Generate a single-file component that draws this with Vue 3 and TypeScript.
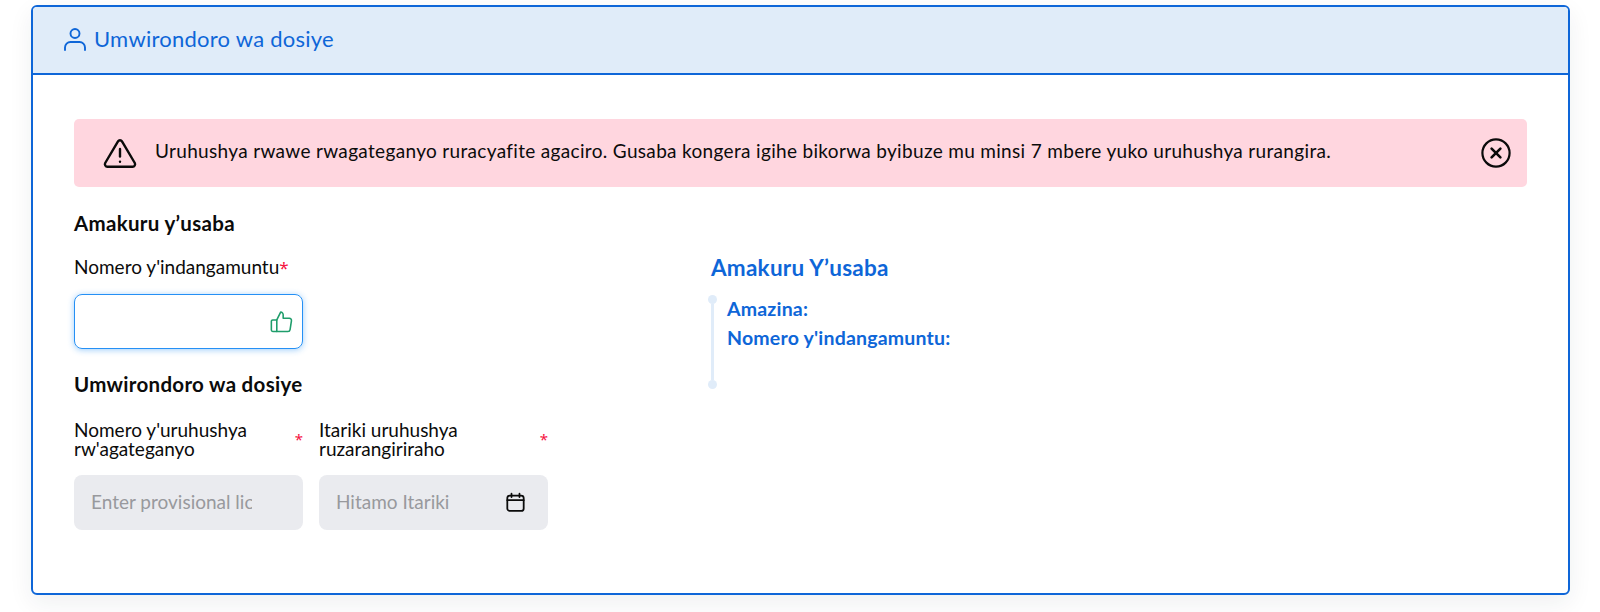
<script setup lang="ts">
const title: string = 'Umwirondoro wa dosiye'
</script>

<template>
  <div class="page">
    <section class="card">
      <header class="card-head">
        <svg class="user" width="24" height="24" viewBox="0 0 24 24" fill="none" stroke="#0e66d8" stroke-width="1.9" stroke-linecap="round" stroke-linejoin="round">
          <circle cx="12" cy="6.5" r="4.5" />
          <path d="M2 23v-2.5A5.5 5.5 0 0 1 7.500 15h9a5.500 5.500 0 0 1 5.500 5.500V23" />
        </svg>
        <span>{{ title }}</span>
      </header>
      <div class="card-body">
        <div class="alert">
          <svg class="warn" width="34" height="30" viewBox="0 0 34 30" fill="none" stroke="#0b0b0b" stroke-width="2.4" stroke-linecap="round" stroke-linejoin="round">
            <path d="M15 3.400 2.200 25a2.600 2.600 0 0 0 2.200 3.800h25.200a2.600 2.600 0 0 0 2.200-3.800L19 3.400a2.300 2.300 0 0 0-4 0Z" />
            <path d="M17 11v7.500" />
            <path d="M17 23.600v.2" />
          </svg>
          <p class="alert-text">Uruhushya rwawe rwagateganyo ruracyafite agaciro. Gusaba kongera igihe bikorwa byibuze mu minsi 7 mbere yuko uruhushya rurangira.</p>
          <svg class="close" width="30" height="30" viewBox="0 0 30 30" fill="none" stroke="#0b0b0b" stroke-linecap="round">
            <circle cx="15" cy="15" r="13.600" stroke-width="2.200" />
            <path d="m10.600 10.600 8.800 8.800M19.400 10.600l-8.800 8.800" stroke-width="2.600" />
          </svg>
        </div>
        <div class="columns">
          <div class="left">
            <h3 class="section">Amakuru y’usaba</h3>
            <label class="label single">Nomero y'indangamuntu<span class="req">*</span></label>
            <div class="input focus">
              <svg width="23" height="23" viewBox="0 0 22 22" fill="none" stroke="#1f9d6b" stroke-width="1.5" stroke-linejoin="round" stroke-linecap="round">
                <path d="M6.500 9.500v11H2.600a1.300 1.300 0 0 1-1.300-1.300v-8.400a1.300 1.300 0 0 1 1.300-1.300h3.900Z" />
                <path d="M6.500 9.500 10.200 2a2.500 2.500 0 0 1 2.400 2.600v3.300h5.900a2 2 0 0 1 2 2.400l-1.300 8.400a2.100 2.100 0 0 1-2.100 1.800H6.500" />
              </svg>
            </div>
            <h3 class="section second">Umwirondoro wa dosiye</h3>
            <div class="pair">
              <div class="field">
                <label class="label double"><span class="label-text">Nomero y'uruhushya rw'agateganyo</span><span class="req side">*</span></label>
                <div class="input filled"><span class="ph clip">Enter provisional license</span></div>
              </div>
              <div class="field">
                <label class="label double"><span class="label-text">Itariki uruhushya ruzarangiriraho</span><span class="req side">*</span></label>
                <div class="input filled date">
                  <span class="ph">Hitamo Itariki</span>
                  <svg width="21" height="21" viewBox="0 0 20 20" fill="none" stroke="#0b0b0b" stroke-width="1.700" stroke-linecap="round" stroke-linejoin="round">
                    <rect x="2.200" y="3.400" width="15.600" height="14.600" rx="2.400" />
                    <path d="M2.200 7.800h15.600M6.200 1.600v3.200M13.800 1.600v3.200" />
                  </svg>
                </div>
              </div>
            </div>
          </div>
          <aside class="right">
            <h3 class="aside-title">Amakuru Y’usaba</h3>
            <div class="timeline">
              <div class="rail"><i class="dot"></i><i class="line"></i><i class="dot"></i></div>
              <div class="rows">
                <div class="row">Amazina:</div>
                <div class="row">Nomero y'indangamuntu:</div>
              </div>
            </div>
          </aside>
        </div>
      </div>
    </section>
  </div>
</template>

<style>
html, body { margin: 0; background: #fff; }
</style>

<style scoped>
.page {
  height: 612px;
  box-sizing: border-box;
  padding: 5px 30px 0 31px;
  font-family: "Lato", "Noto Sans", sans-serif;
  color: #0b0b0b;
  overflow: hidden;
}
.card {
  height: 590px;
  box-sizing: border-box;
  border: 2px solid #0e66d8;
  border-radius: 6px;
  box-shadow: 0 8px 24px rgba(30, 40, 60, 0.07);
  overflow: hidden;
  background: #fff;
}
.card-head {
  height: 68px;
  box-sizing: border-box;
  display: flex;
  align-items: center;
  gap: 7px;
  padding: 0 0 3px 30px;
  background: #e0ecf9;
  border-bottom: 2px solid #0e66d8;
  color: #0e66d8;
  font-size: 22px;
  letter-spacing: 0.25px;
}
.card-body {
  padding: 44px 41px 0 41px;
}
.alert {
  height: 68px;
  box-sizing: border-box;
  display: flex;
  align-items: center;
  padding: 0 16px 0 29px;
  background: #ffd6df;
  border-radius: 5px;
}
.alert-text {
  flex: 1;
  margin: 0 0 5px 18px;
  font-size: 19px;
  letter-spacing: 0.33px;
}
.columns {
  display: flex;
}
.left {
  width: 637px;
}
.section {
  margin: 25px 0 0;
  font-size: 20.5px;
  font-weight: 700;
  line-height: 22px;
  letter-spacing: 0.3px;
}
.section.second {
  margin-top: 24px;
}
.label {
  display: block;
  font-size: 19px;
  line-height: 19px;
}
.label.single {
  margin-top: 23px;
}
.req {
  color: #f5123f;
  font-family: "Noto Sans", sans-serif;
  font-size: 17px;
}
.pair {
  display: flex;
  gap: 16px;
  margin-top: 25px;
}
.field {
  width: 229px;
}
.label.double {
  display: flex;
  justify-content: space-between;
  align-items: center;
  height: 38px;
}
.label-text {
  width: 200px;
}
.side {
  font-size: 15px;
}
.input {
  width: 229px;
  height: 55px;
  box-sizing: border-box;
  border-radius: 8px;
  display: flex;
  align-items: center;
}
.focus {
  margin-top: 17px;
  justify-content: flex-end;
  padding-right: 9px;
  border: 1.5px solid #2590f5;
  box-shadow: 0 1px 6px rgba(37, 144, 245, 0.45);
}
.filled {
  margin-top: 17px;
  background: #eaebef;
  padding: 0 16px 0 17px;
}
.date {
  justify-content: space-between;
  padding-right: 22px;
}
.ph {
  color: #98999d;
  font-size: 19px;
  white-space: nowrap;
  margin-top: -3px;
}
.clip {
  display: block;
  width: 161px;
  overflow: hidden;
}
.right {
  flex: 1;
  padding-top: 69px;
}
.aside-title {
  margin: 0;
  color: #0e66d8;
  font-size: 22.5px;
  font-weight: 700;
  line-height: 24px;
  letter-spacing: 0.25px;
}
.timeline {
  display: flex;
  margin-top: 15px;
}
.rail {
  width: 9px;
  height: 94px;
  margin-left: -3px;
  display: flex;
  flex-direction: column;
  align-items: center;
}
.dot {
  width: 9px;
  height: 9px;
  flex: none;
  border-radius: 50%;
  background: #e0ecf9;
}
.line {
  width: 3px;
  flex: 1;
  background: #e0ecf9;
}
.rows {
  margin: -1px 0 0 10px;
}
.row {
  color: #0e66d8;
  font-size: 19.5px;
  font-weight: 700;
  line-height: 29px;
  letter-spacing: 0.2px;
}
</style>
